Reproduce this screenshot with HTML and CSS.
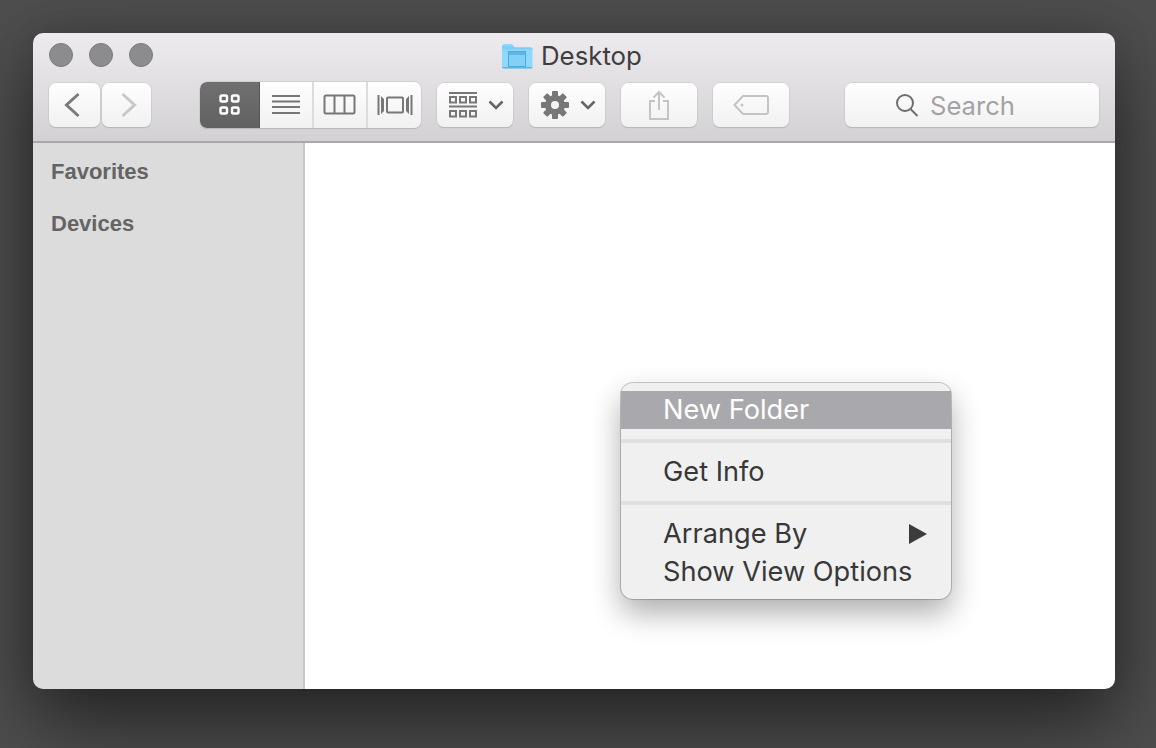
FILE: index.html
```html
<!DOCTYPE html>
<html lang="en">
<head>
<meta charset="utf-8">
<title>Desktop</title>
<link rel="stylesheet" href="styles.css">
</head>
<body>
<div class="window">
  <header class="toolbar">
    <div class="title-row">
      <div class="lights"><span class="light"></span><span class="light"></span><span class="light"></span></div>
      <div class="title">
        <svg class="folder" width="32" height="26" viewBox="0 0 32 26"><path d="M1 3.500C1 2 2 1 3.500 1H10c1 0 1.500.4 2.200 1.200L13.500 4H29c1.500 0 2.500 1 2.500 2.500V23c0 1.500-1 2.500-2.500 2.500H3.500C2 25.500 1 24.500 1 23z" fill="#8fd7fb"/><path d="M1 6.500h30.500V5H13.500L12 3H1z" fill="#7ccdf7"/><path d="M1 24h30.500v.5c0 .6-1 1-2.500 1H3.500c-1.500 0-2.500-.4-2.500-1z" fill="#62b6e6"/><rect x="7.500" y="8.500" width="17" height="15" fill="#84cff6" stroke="#4ea9dc"/><rect x="8" y="9" width="16" height="3" fill="#5db6e6"/></svg>
        <span class="title-text">Desktop</span>
      </div>
    </div>
    <div class="controls">
      <div class="nav">
        <button class="btn nav-btn nav-prev"><svg width="16" height="26" viewBox="0 0 16 26"><path d="M14.500 2 2.500 13 14.500 24" fill="none" stroke="#7a7a7a" stroke-width="3"/></svg></button>
        <button class="btn nav-btn nav-next"><svg width="16" height="26" viewBox="0 0 16 26"><path d="M1.500 2 13.500 13 1.500 24" fill="none" stroke="#c8c8c8" stroke-width="3"/></svg></button>
      </div>
      <div class="views">
        <div class="view view-active"><svg width="22" height="22" viewBox="0 0 22 22" fill="none" stroke="#fff" stroke-width="2.400"><rect x="1.500" y="1.500" width="6.500" height="6" rx="1.500"/><rect x="13" y="1.500" width="6.500" height="6" rx="1.500"/><rect x="1.500" y="13.500" width="6.500" height="6" rx="1.500"/><rect x="13" y="13.500" width="6.500" height="6" rx="1.500"/></svg></div>
        <div class="view view-list"><svg width="30" height="22" viewBox="0 0 30 22" fill="#777"><rect x="1" y="1" width="28" height="2"/><rect x="1" y="6.500" width="28" height="2"/><rect x="1" y="12" width="28" height="2"/><rect x="1" y="18" width="28" height="2"/></svg></div>
        <div class="view view-cols"><svg width="34" height="22" viewBox="0 0 34 22" fill="none" stroke="#777" stroke-width="2"><rect x="1.500" y="1.500" width="30" height="18" rx="1.500"/><path d="M11.500 2v18M21.500 2v18"/></svg></div>
        <div class="view view-flow"><svg width="38" height="22" viewBox="0 0 38 22" fill="none" stroke="#777" stroke-width="2"><path d="M2.500 1v20M35.500 1v20"/><path d="M5 2l3 3v12l-3 3zM33 2l-3 3v12l3 3z" fill="#777" stroke="none"/><rect x="11" y="3.500" width="16" height="15" rx="1"/></svg></div>
      </div>
      <button class="btn tool tool-menu"><svg width="28" height="26" viewBox="0 0 28 26" fill="none" stroke="#777" stroke-width="2"><path d="M0 1h28M0 14.500h28"/><rect x="1" y="5" width="6" height="5.500"/><rect x="11" y="5" width="6" height="5.500"/><rect x="21" y="5" width="6" height="5.500"/><rect x="1" y="19" width="6" height="5.500"/><rect x="11" y="19" width="6" height="5.500"/><rect x="21" y="19" width="6" height="5.500"/></svg><svg width="16" height="10" viewBox="0 0 16 10"><path d="M1.500 1.500 8 8l6.500-6.500" fill="none" stroke="#666" stroke-width="2.600"/></svg></button>
      <button class="btn tool tool-menu"><svg width="28" height="28" viewBox="0 0 28 28"><g fill="#777"><circle cx="14" cy="14" r="10"/><rect x="11" y="0" width="6" height="28" rx="1"/><rect x="11" y="0" width="6" height="28" rx="1" transform="rotate(45 14 14)"/><rect x="11" y="0" width="6" height="28" rx="1" transform="rotate(90 14 14)"/><rect x="11" y="0" width="6" height="28" rx="1" transform="rotate(135 14 14)"/></g><circle cx="14" cy="14" r="4" fill="#f4f4f4"/></svg><svg width="16" height="10" viewBox="0 0 16 10"><path d="M1.500 1.500 8 8l6.500-6.500" fill="none" stroke="#666" stroke-width="2.600"/></svg></button>
      <button class="btn tool"><svg width="22" height="30" viewBox="0 0 22 30" fill="none" stroke="#c4c4c4" stroke-width="2"><path d="M7 11H2v18h18V11h-5M11 20V2M5.500 7.500 11 2l5.500 5.500"/></svg></button>
      <button class="btn tool"><svg width="36" height="20" viewBox="0 0 36 20" fill="none" stroke="#c4c4c4" stroke-width="2"><path d="M10 1h23a2 2 0 0 1 2 2v14a2 2 0 0 1-2 2H10L1.500 10z"/><circle cx="9" cy="10" r="1.500" fill="#c4c4c4" stroke="none"/></svg></button>
      <div class="btn search">
        <svg width="24" height="24" viewBox="0 0 24 24" fill="none" stroke="#6e6e6e" stroke-width="2"><circle cx="10" cy="10" r="8"/><path d="m15.500 16 7 7"/></svg>
        <span>Search</span>
      </div>
    </div>
  </header>
  <div class="body">
    <aside class="sidebar">
      <div class="side-head">Favorites</div>
      <div class="side-head">Devices</div>
    </aside>
    <main class="content"></main>
  </div>
  <div class="menu">
    <div class="item item-active">New Folder</div>
    <div class="sep"></div>
    <div class="item">Get Info</div>
    <div class="sep"></div>
    <div class="item item-sub">Arrange By<svg width="18" height="20" viewBox="0 0 18 20"><path d="M0 0 18 10 0 20z" fill="#3c3c3c"/></svg></div>
    <div class="item">Show View Options</div>
  </div>
</div>
</body>
</html>
```

FILE: styles.css
```css
* { box-sizing: border-box; }
html, body { margin: 0; height: 100%; }
body {
  width: 1156px;
  height: 748px;
  overflow: hidden;
  padding: 33px 41px 0 33px;
  background: #4e4e4e;
  font-family: Inter, "Liberation Sans", sans-serif;
}
.window {
  position: relative;
  width: 1082px;
  height: 656px;
  border-radius: 10px;
  display: flex;
  flex-direction: column;
  box-shadow: 0 35px 80px rgba(0,0,0,.52), 0 0 40px rgba(0,0,0,.14);
}
.toolbar {
  height: 110px;
  flex: none;
  border-radius: 10px 10px 0 0;
  border-bottom: 2px solid #a9a8aa;
  background: linear-gradient(#edebee, #d3d1d3);
  padding: 10px 16px 0;
  display: flex;
  flex-direction: column;
}
.title-row { position: relative; height: 24px; display: flex; align-items: center; }
.lights { display: flex; gap: 16px; }
.light {
  width: 24px; height: 24px; border-radius: 50%;
  background: #8c8b8d;
  border: 1px solid #7b7a7c;
}
.title {
  position: absolute;
  left: 452px;
  top: -2px;
  display: flex;
  align-items: center;
  gap: 8px;
  font-size: 25.800px;
  color: #3f3d3f;
  height: 30px;
  white-space: nowrap;
}
.title-text { margin-top: -2px; }
.controls { display: flex; align-items: flex-start; margin-top: 16px; position: relative; }
.btn {
  height: 44px;
  margin: 0;
  padding: 0;
  border: 0;
  border-radius: 7px;
  background: linear-gradient(#fefefe, #f1f1f1);
  box-shadow: 0 0 0 .5px #c5c4c6, 0 1px 1px #a9a8aa;
  display: flex;
  align-items: center;
  justify-content: center;
}
.nav { display: flex; gap: 2px; margin-right: 49px; }
.nav-btn { width: 51px; }
.nav-prev svg { margin-right: 5px; }
.nav-next { width: 49px; }
.nav-next svg { margin-left: 4px; }
.views {
  display: flex;
  height: 46px;
  width: 221px;
  margin-top: -1px;
  margin-right: 16px;
  border-radius: 7px;
  background: linear-gradient(#fefefe, #f1f1f1);
  box-shadow: 0 0 0 .5px #c5c4c6, 0 1px 1px #a9a8aa;
  overflow: hidden;
}
.view { display: flex; align-items: center; justify-content: center; border-left: 1px solid #dcdcdc; }
.view-active {
  width: 60px;
  border-left: 0;
  border-right: 1px solid #555;
  background: linear-gradient(#707070, #616161);
}
.view-list { width: 52px; border-left: 0; }
.view-cols { width: 54px; border-left-width: 2px; }
.view-flow { width: 55px; border-left-width: 2px; }
.tool { width: 76px; margin-right: 16px; gap: 11px; }
.tool-menu { padding-left: 2px; }
.search {
  position: absolute;
  left: 796px;
  width: 254px;
  gap: 11px;
  padding-left: 50px;
  justify-content: flex-start;
  font-size: 25.600px;
  color: #a3a2a4;
}
.body { flex: 1; display: flex; min-height: 0; }
.sidebar {
  width: 272px;
  flex: none;
  background: #dcdcdc;
  border-right: 2px solid #c6c6c6;
  border-radius: 0 0 0 10px;
  padding: 16px 18px;
  display: flex;
  flex-direction: column;
  gap: 26px;
}
.side-head { font-size: 22px; line-height: 26px; font-weight: 700; color: #646464; font-family: "Liberation Sans", sans-serif; }
.content { flex: 1; background: #fff; border-radius: 0 0 10px 0; }
.menu {
  position: absolute;
  left: 588px;
  top: 350px;
  width: 330px;
  height: 216px;
  padding-top: 8px;
  border-radius: 12px;
  background: #f0f0f0;
  box-shadow: 0 0 0 1px rgba(0,0,0,.2), 0 14px 30px rgba(0,0,0,.32);
  font-size: 27.200px;
  color: #383838;
}
.item {
  height: 38px;
  line-height: 38px;
  padding: 0 24px 0 42px;
  white-space: nowrap;
}
.item-active { background: #a9a8ac; color: #fff; }
.item-sub { display: flex; align-items: center; justify-content: space-between; }
.sep { height: 4px; margin: 10px 0; background: #e0e0e0; }
```
